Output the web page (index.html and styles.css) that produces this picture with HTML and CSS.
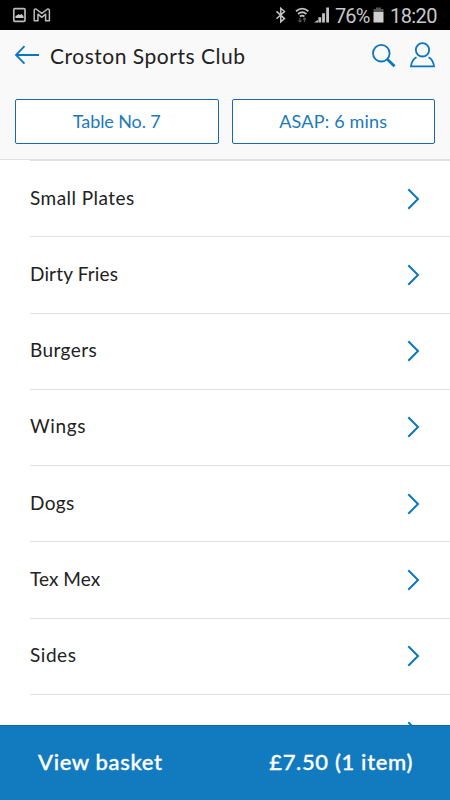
FILE: index.html
```
<!DOCTYPE html>
<html lang="en">
<head>
<meta charset="utf-8">
<title>Croston Sports Club</title>
<link rel="stylesheet" href="styles.css">
</head>
<body>
<svg class="defs" width="0" height="0"><symbol id="chevron" viewBox="0 0 14 22"><path d="M1.3 1.2 11 11 1.3 20.8"/></symbol></svg>
<div class="status">
  <svg class="notices" width="54" height="30" viewBox="0 0 54 30">
    <rect x="13.8" y="8.7" width="11.2" height="12.6" rx="1" fill="none" stroke="#bbb" stroke-width="1.7"/>
    <path d="M15.5 18v-2l2-1 1-1 1.5 1 1.500-1 2 2v2z" fill="#ccc"/>
    <path d="M34.2 20.8V10.5Q34.2 8.7 36 9l5.8 4.3L47.6 9q1.8-.3 1.8 1.5v10.3h-3.8v-6.6l-3.8 3.1-3.8-3.1v6.6z" fill="none" stroke="#bbb" stroke-width="1.5" stroke-linejoin="round"/>
  </svg>
  <svg class="radios" width="64" height="30" viewBox="270 0 64 30" fill="none" stroke="#c4c4c4">
    <path d="m276.5 11.400 8 7.200-3.700 3.200V8.300l3.700 3.200-8 7.200" stroke-width="1.5"/>
    <path d="M296 11.200q6.200-5.200 12.400 0M298 14q4.200-3.400 8.400 0M300 16.500q2.200-1.600 4.400 0" stroke-width="1.8"/>
    <path d="M300 18v4m-1.500-1.500L300 22l1.500-1.500M304.500 22v-4m-1.500 1.500 1.500-1.500 1.500 1.500" stroke="#555" stroke-width="1.2"/>
    <path d="M314 22.500l4-2.500v2.500z" fill="#c4c4c4" stroke="none"/>
    <path d="M319.800 22.500v-5.300M323.500 22.500v-9.200M327.600 22.500V7.500" stroke-width="2.800"/>
  </svg>
  <span class="percent">76%</span>
  <svg class="battery" width="11" height="30" viewBox="0 0 11 30"><path d="M3 7.500h5V9h2.500v3H.5V9H3z" fill="#555"/><path d="M.5 12h10v10.500H.5z" fill="#d0d0d0"/></svg>
  <span class="clock">18:20</span>
</div>
<header class="header">
  <div class="titlebar">
    <svg class="back" width="26" height="22" viewBox="0 0 26 22"><path d="M25 11H2.200M10.500 2.200 2 11l8.500 8.600"/></svg>
    <h1 class="title">Croston Sports Club</h1>
    <svg class="search" width="24" height="24" viewBox="0 0 24 24"><circle cx="9.300" cy="9.200" r="8.300"/><path d="m15.300 15.200 7.200 7" stroke-width="2.800"/></svg>
    <svg class="person" width="26" height="26" viewBox="0 0 26 26"><circle cx="13.500" cy="7.800" r="6.700"/><path d="M7.500 15.200q-4.700 2.300-5.500 9.200h23q-.8-6.900-5.500-9.200"/></svg>
  </div>
  <div class="options">
    <button class="option table">Table No. 7</button>
    <button class="option time">ASAP: 6 mins</button>
  </div>
</header>
<main class="menu">
  <div class="row"><span class="plates">Small Plates</span><svg class="chevron"><use href="#chevron"/></svg></div>
  <div class="row"><span class="fries">Dirty Fries</span><svg class="chevron"><use href="#chevron"/></svg></div>
  <div class="row"><span class="burgers">Burgers</span><svg class="chevron"><use href="#chevron"/></svg></div>
  <div class="row"><span class="wings">Wings</span><svg class="chevron"><use href="#chevron"/></svg></div>
  <div class="row"><span class="dogs">Dogs</span><svg class="chevron"><use href="#chevron"/></svg></div>
  <div class="row"><span class="texmex">Tex Mex</span><svg class="chevron"><use href="#chevron"/></svg></div>
  <div class="row"><span class="sides">Sides</span><svg class="chevron"><use href="#chevron"/></svg></div>
  <div class="row"><svg class="chevron"><use href="#chevron"/></svg></div>
</main>
<footer class="basket"><span class="view">View basket</span><span class="total">£7.50 (1 item)</span></footer>
</body>
</html>
```
FILE: styles.css
```
* { box-sizing: border-box; }
body {
  margin: 0;
  height: 800px;
  display: flex;
  flex-direction: column;
  overflow: hidden;
  background: #fff;
  color: #222;
  font-family: Lato, "Noto Sans", sans-serif;
}
svg { display: block; flex: none; }
.defs { position: absolute; }
.status {
  height: 30px;
  flex: none;
  display: flex;
  align-items: center;
  background: #000;
  color: #c8c8c8;
  font: 20px/30px Roboto, sans-serif;
}
.radios { margin-left: auto; }
.percent { width: 37px; margin-left: 1px; letter-spacing: -0.9px; white-space: nowrap; }
.battery { margin-left: 1px; }
.clock { width: 66px; padding: 1px 0 0 6px; letter-spacing: -0.6px; }
.percent { padding-top: 1px; }
.header {
  height: 130px;
  flex: none;
  background: #f9f9f9;
  border-bottom: 1px solid #e0e0e0;
}
.titlebar {
  height: 69px;
  display: flex;
  align-items: flex-start;
  padding: 11px 15px 0 14px;
}
.titlebar svg, .chevron { fill: none; stroke: #0c76bd; stroke-width: 1.8; }
.back { margin-top: 3px; }
.title {
  margin: 0 auto 0 10px;
  font-size: 21px;
  line-height: 30px;
  font-weight: 400;
  letter-spacing: 0.52px;
  white-space: nowrap;
}
.search { margin-top: 3px; }
.person { margin: 1px 0 0 13px; }
.options { display: flex; gap: 13px; padding: 0 15px; }
.option {
  flex: 1;
  height: 45px;
  padding: 0 0 2px;
  border: 1px solid #1b67b2;
  border-radius: 2px;
  background: #fff;
  color: #1c79bd;
  font: 18px/24px Lato, sans-serif;
}
.table { letter-spacing: -0.1px; }
.time { letter-spacing: 0.2px; }
.menu { flex: 1; min-height: 0; overflow: hidden; padding-left: 30px; }
.row {
  height: 76.25px;
  display: flex;
  align-items: center;
  padding-right: 29px;
  border-top: 1px solid #e0e0e0;
  font-size: 19px;
  line-height: 28px;
  letter-spacing: 0.4px;
}
.row:first-child { border-top-width: 1px; }
.row span { padding-bottom: 2px; }
.plates { letter-spacing: 0.45px; }
.fries { letter-spacing: 0.15px; }
.wings { letter-spacing: 0.65px; }
.texmex { letter-spacing: 0.05px; }
.sides { letter-spacing: 0.55px; }
.chevron { width: 14px; height: 22px; margin-left: auto; stroke-width: 2; }
.basket {
  height: 75px;
  flex: none;
  display: flex;
  justify-content: space-between;
  align-items: center;
  padding: 0 37px 3px 38px;
  border-top: 1px solid #096bb0;
  background: #127abf;
  color: #fff;
  font-size: 22px;
  font-weight: 500;
  letter-spacing: 0.65px;
  -webkit-text-stroke: 0.35px #fff;
}
```
